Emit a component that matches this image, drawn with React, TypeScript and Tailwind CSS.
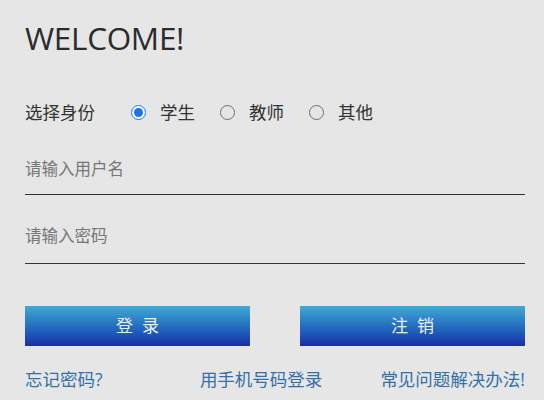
import React from "react";

const font = { fontFamily: '"Open Sans", "Noto Sans CJK SC", sans-serif' };

function Radio({ checked, label }: { checked?: boolean; label: string }) {
  return (
    <label className="flex items-center">
      <span
        className={
          checked
            ? "w-[15px] h-[15px] rounded-full border-[1.5px] border-[#1a73e8] flex items-center justify-center bg-white"
            : "w-[15px] h-[15px] rounded-full border-[1.5px] border-[#6e6e6e] bg-[#e6e6e6]"
        }
      >
        {checked && <span className="w-[9px] h-[9px] rounded-full bg-[#1a73e8]" />}
      </span>
      <span className="ml-[14px] text-[17.5px] text-[#333]">{label}</span>
    </label>
  );
}

export default function App() {
  return (
    <div className="w-[544px] h-[400px] bg-[#e6e6e6] overflow-hidden" style={font}>
      <div className="pl-[25px] w-[525px]">
        <h1 className="pt-[18px] text-[31.5px] leading-[40px] text-[#2b2b2b] tracking-[-0.3px]">WELCOME!</h1>
        <div className="mt-[42px] flex items-center h-[24px] text-[17.5px] text-[#333]">
          <span className="w-[106px]">选择身份</span>
          <div className="flex items-center gap-[25px]">
            <Radio checked label="学生" />
            <Radio label="教师" />
            <Radio label="其他" />
          </div>
        </div>
        <div className="mt-[24px] border-b border-[#333] h-[47px] pt-[9px] text-[16.5px] text-[#777]">请输入用户名</div>
        <div className="mt-[21px] border-b border-[#333] h-[48px] pt-[8px] text-[16.5px] text-[#777]">请输入密码</div>
        <div className="mt-[42px] flex justify-between">
          <button className="w-[225px] h-[40px] bg-gradient-to-b from-[#43aad2] to-[#1b2ca8] text-[#eef] text-[17px] tracking-[9px] pl-[9px]">登录</button>
          <button className="w-[225px] h-[40px] bg-gradient-to-b from-[#43aad2] to-[#1b2ca8] text-[#eef] text-[17px] tracking-[9px] pl-[9px]">注销</button>
        </div>
        <div className="mt-[21px] flex text-[17.5px] text-[#3470a8] leading-[24px]">
          <span>忘记密码?</span>
          <span className="ml-auto">用手机号码登录</span>
          <span className="ml-[58px]">常见问题解决办法!</span>
        </div>
      </div>
    </div>
  );
}
